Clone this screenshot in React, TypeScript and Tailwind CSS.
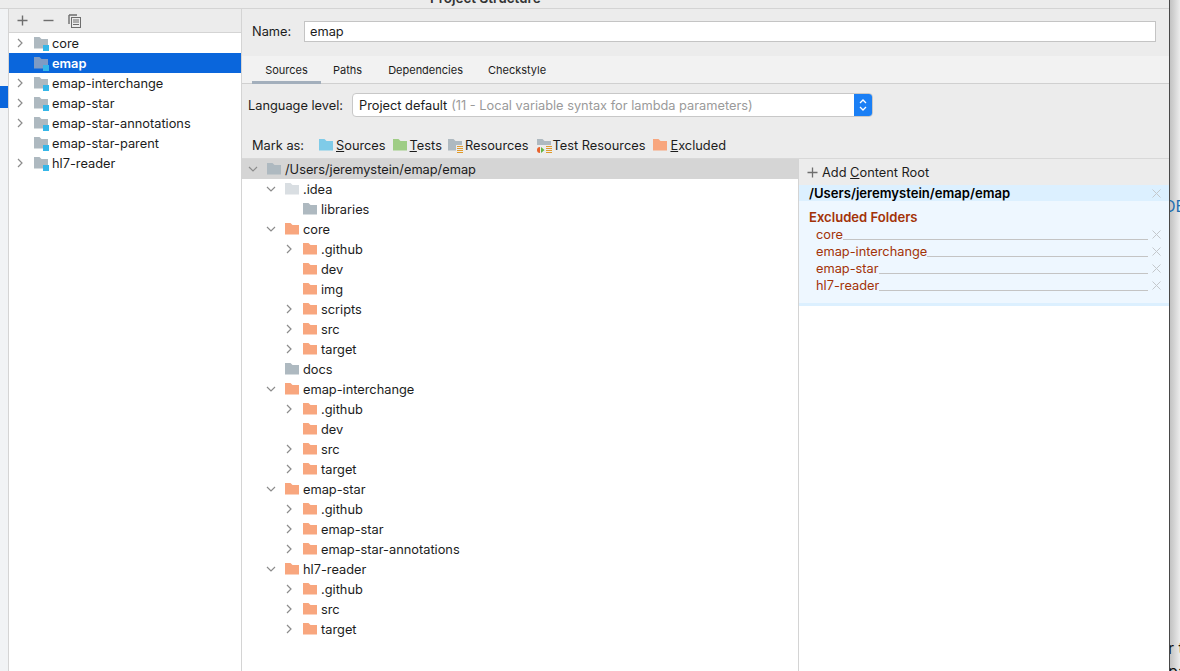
import React from "react";

const FOLDER = "M0 0h5.5l2 2H14v9.500H0z";

function Folder({ color, className = "" }: { color: string; className?: string }) {
  return (
    <svg width="14" height="12" viewBox="0 0 14 12" className={`shrink-0 ${className}`}>
      <path d={FOLDER} fill={color} />
    </svg>
  );
}

function MarkFolder({ color, className = "" }: { color: string; className?: string }) {
  return (
    <svg width="14" height="16" viewBox="0 0 14 16" className={`shrink-0 mt-[2px] ${className}`}>
      <path d={FOLDER} fill={color} />
    </svg>
  );
}

function ModuleIcon({ selected }: { selected?: boolean }) {
  return (
    <svg width="16" height="20" viewBox="0 0 16 20" className="shrink-0">
      <path d="M0 4h5.500l2 2H14v9.500H0z" fill={selected ? "#7d9bc4" : "#aeb9c0"} />
      <rect x="9" y="12" width="6" height="6" fill="#35b6e8" />
    </svg>
  );
}

function Chevron({ down, className = "" }: { down?: boolean; className?: string }) {
  return (
    <svg width="10" height="10" viewBox="0 0 10 10" className={`shrink-0 ${className}`}>
      <path d={down ? "M1 3l4 4 4-4" : "M3 1l4 4-4 4"} fill="none" stroke="#8c8c8c" strokeWidth="1.2" />
    </svg>
  );
}

function ResourcesIcon() {
  return (
    <svg width="16" height="16" viewBox="0 0 16 16" className="shrink-0 ml-[6px] mt-[2px]">
      <path d={FOLDER} fill="#aeb9c0" />
      <rect x="8" y="6" width="8" height="10" fill="#ececec" />
      <path d="M9 7.500h6M9 9.500h6M9 11.500h6M9 13.500h6" fill="none" stroke="#e09a2c" />
    </svg>
  );
}

function TestResourcesIcon() {
  return (
    <svg width="17" height="16" viewBox="0 0 17 16" className="shrink-0 ml-[7px] mt-[2px]">
      <path d="M1 0h5.500l2 2H15v9.500H1z" fill="#aeb9c0" />
      <rect x="0" y="6" width="17" height="10" fill="#ececec" />
      <path d="M4 8v6a3 3 0 0 1 0-6z" fill="#e8622c" />
      <path d="M5 8l3.500 3L5 14z" fill="#62b543" />
      <path d="M10 7.500h6M10 9.500h6M10 11.500h6M10 13.500h6" fill="none" stroke="#e09a2c" />
    </svg>
  );
}

const modules: { name: string; arrow: boolean; selected?: boolean }[] = [
  { name: "core", arrow: true },
  { name: "emap", arrow: false, selected: true },
  { name: "emap-interchange", arrow: true },
  { name: "emap-star", arrow: true },
  { name: "emap-star-annotations", arrow: true },
  { name: "emap-star-parent", arrow: false },
  { name: "hl7-reader", arrow: true },
];

type Node = { name: string; level: number; arrow?: "r" | "d"; color: string };
const OR = "#f8a67e";
const tree: Node[] = [
  { name: ".idea", level: 1, arrow: "d", color: "#d9dee2" },
  { name: "libraries", level: 2, color: "#aeb9c0" },
  { name: "core", level: 1, arrow: "d", color: OR },
  { name: ".github", level: 2, arrow: "r", color: OR },
  { name: "dev", level: 2, color: OR },
  { name: "img", level: 2, color: OR },
  { name: "scripts", level: 2, arrow: "r", color: OR },
  { name: "src", level: 2, arrow: "r", color: OR },
  { name: "target", level: 2, arrow: "r", color: OR },
  { name: "docs", level: 1, color: "#aeb9c0" },
  { name: "emap-interchange", level: 1, arrow: "d", color: OR },
  { name: ".github", level: 2, arrow: "r", color: OR },
  { name: "dev", level: 2, color: OR },
  { name: "src", level: 2, arrow: "r", color: OR },
  { name: "target", level: 2, arrow: "r", color: OR },
  { name: "emap-star", level: 1, arrow: "d", color: OR },
  { name: ".github", level: 2, arrow: "r", color: OR },
  { name: "emap-star", level: 2, arrow: "r", color: OR },
  { name: "emap-star-annotations", level: 2, arrow: "r", color: OR },
  { name: "hl7-reader", level: 1, arrow: "d", color: OR },
  { name: ".github", level: 2, arrow: "r", color: OR },
  { name: "src", level: 2, arrow: "r", color: OR },
  { name: "target", level: 2, arrow: "r", color: OR },
];

function Close({ className = "" }: { className?: string }) {
  return (
    <svg width="9" height="9" viewBox="0 0 9 9" className={`shrink-0 ${className}`}>
      <path d="M0.500 0.500l8 8M8.500 0.500l-8 8" stroke="#c4c8cc" strokeWidth="1" />
    </svg>
  );
}

function TreeRow({ n }: { n: Node }) {
  return (
    <div className={`flex items-center h-5 ${n.level === 1 ? "pl-[24px]" : "pl-[42px]"}`}>
      <div className="w-[19px] shrink-0 flex">{n.arrow && <Chevron down={n.arrow === "d"} />}</div>
      <Folder color={n.color} />
      <span className="ml-[4px] mt-[2px]">{n.name}</span>
    </div>
  );
}

export default function App() {
  return (
    <div className="w-[1180px] h-[671px] overflow-hidden flex bg-white text-[12.8px] text-[#1c1c1c] font-['Inter','Liberation_Sans',sans-serif]">
      <div className="w-[1170px] shrink-0 flex flex-col border-r border-[#484848]">
        <div className="h-[9px] shrink-0 bg-[#ececec] border-b border-[#d4d4d4] overflow-hidden pl-[430px]">
          <div className="-mt-[12px] font-semibold text-[13.5px] text-[#333]">Project Structure</div>
        </div>
        <div className="flex flex-1 min-h-0">
          <div className="w-[9px] shrink-0 bg-[#f1f3f5] border-r border-[#d4d4d4] pt-[77px]">
            <div className="h-[22px] bg-[#0a66dc]" />
          </div>
          <div className="w-[233px] shrink-0 border-r border-[#d4d4d4] flex flex-col">
            <div className="h-[24px] shrink-0 bg-[#ececec] border-b border-[#d4d4d4] flex items-center pl-[8px]">
              <svg width="11" height="11" viewBox="0 0 11 11">
                <path d="M5.500 0.500v10M0.500 5.500h10" stroke="#6e6e6e" strokeWidth="1.4" />
              </svg>
              <svg width="11" height="11" viewBox="0 0 11 11" className="ml-[15px]">
                <path d="M0.500 5.500h10" stroke="#6e6e6e" strokeWidth="1.4" />
              </svg>
              <svg width="14" height="14" viewBox="0 0 14 14" className="ml-[14px]">
                <path d="M1 1h8M1 1v9" stroke="#6e6e6e" strokeWidth="1.4" fill="none" />
                <rect x="3.500" y="3.500" width="9" height="10" fill="none" stroke="#6e6e6e" />
                <path d="M5 6h6M5 8h6M5 10.500h6" stroke="#6e6e6e" />
              </svg>
            </div>
            {modules.map((m) => (
              <div
                key={m.name}
                className={`flex items-center h-5 shrink-0 ${m.selected ? "bg-[#0a66dc] text-white font-semibold" : ""}`}
              >
                <div className="w-[25px] shrink-0 pl-[6px] flex">{m.arrow && <Chevron />}</div>
                <ModuleIcon selected={m.selected} />
                <span className="ml-[2px] mt-[2px]">{m.name}</span>
              </div>
            ))}
          </div>
          <div className="w-[927px] shrink-0 bg-[#ececec] flex flex-col">
            <div className="h-[47px] shrink-0 flex items-center pl-[10px] pr-[13px] pb-[2px]">
              <span className="w-[52px] shrink-0">Name:</span>
              <div className="flex-1 h-[21px] bg-white border border-[#c4c4c4] flex items-center pl-[5px]">emap</div>
            </div>
            <div className="h-[28px] shrink-0 bg-[#f2f2f2] border-b border-[#d0d0d0] flex pl-[10px] text-[11px]">
              <div className="w-[69px] h-[28px] flex items-center justify-center border-b-[3px] border-[#a3afbc] pt-[4px]">Sources</div>
              <div className="ml-[12px] flex items-center pt-[2px]">Paths</div>
              <div className="ml-[26px] flex items-center pt-[2px]">Dependencies</div>
              <div className="ml-[25px] flex items-center pt-[2px]">Checkstyle</div>
            </div>
            <div className="h-[44px] shrink-0 flex items-center pl-[6px] pb-[2px]">
              <span className="w-[104px] shrink-0 mt-[2px]">Language level:</span>
              <div className="w-[521px] h-[24px] bg-white border border-[#c8c8c8] rounded-[4px] flex items-center pl-[6px] relative overflow-hidden">
                <span className="mt-[2px]">Project default</span>
                <span className="ml-[4px] mt-[2px] text-[#9a9a9a]">(11 - Local variable syntax for lambda parameters)</span>
                <div className="absolute right-0 top-0 bottom-0 w-[18px] bg-[#1a7ff5] flex items-center justify-center">
                  <svg width="10" height="16" viewBox="0 0 10 16">
                    <path d="M2 6l3-3 3 3M2 10l3 3 3-3" fill="none" stroke="#fff" strokeWidth="1.3" />
                  </svg>
                </div>
              </div>
            </div>
            <div className="h-[31px] shrink-0 flex items-center pl-[10px] pt-[5px] border-b border-[#d8d8d8]">
              <span className="w-[67px] shrink-0">Mark as:</span>
              <MarkFolder color="#7fcbe8" />
              <span className="ml-[3px]"><u>S</u>ources</span>
              <MarkFolder color="#9fcd85" className="ml-[7px]" />
              <span className="ml-[3px]"><u>T</u>ests</span>
              <ResourcesIcon />
              <span className="ml-[1px]">Resources</span>
              <TestResourcesIcon />
              <span>Test Resources</span>
              <MarkFolder color={OR} className="ml-[8px]" />
              <span className="ml-[3px]"><u>E</u>xcluded</span>
            </div>
            <div className="flex flex-1 min-h-0">
              <div className="w-[557px] shrink-0 bg-white border-r border-[#d4d4d4]">
                <div className="flex items-center h-5 bg-[#d5d5d5] pl-[6px]">
                  <div className="w-[19px] shrink-0 flex"><Chevron down /></div>
                  <Folder color="#aeb9c0" />
                  <span className="ml-[4px] mt-[2px]">/Users/jeremystein/emap/emap</span>
                </div>
                {tree.map((n, i) => (
                  <TreeRow key={i} n={n} />
                ))}
              </div>
              <div className="flex-1 min-w-0 bg-white flex flex-col">
                <div className="h-[26px] shrink-0 bg-[#ececec] flex items-center pl-[8px] pt-[1px]">
                  <svg width="11" height="11" viewBox="0 0 11 11">
                    <path d="M5.500 0.500v10M0.500 5.500h10" stroke="#6e6e6e" strokeWidth="1.3" />
                  </svg>
                  <span className="ml-[4px]">Add <u>C</u>ontent Root</span>
                </div>
                <div className="h-[16px] shrink-0 bg-[#dcf0ff] flex items-center pl-[10px] pr-[8px] font-semibold text-[13.1px] text-black">
                  <span className="flex-1 mt-[2px]">/Users/jeremystein/emap/emap</span>
                  <Close />
                </div>
                <div className="h-[105px] shrink-0 bg-[#eef7ff] border-b-[3px] border-[#dcf0ff] pt-[8px] text-[#a33308]">
                  <div className="h-[17px] flex items-center pl-[10px] font-semibold text-[13.1px]">Excluded Folders</div>
                  {["core", "emap-interchange", "emap-star", "hl7-reader"].map((f) => (
                    <div key={f} className="h-[17px] flex items-center pl-[17px] pr-[8px]">
                      <span>{f}</span>
                      <div className="flex-1 self-end mb-[3px] border-b border-[#c4c4c4]" />
                      <Close className="ml-[4px]" />
                    </div>
                  ))}
                </div>
              </div>
            </div>
          </div>
        </div>
      </div>
      <div className="flex-1 min-w-0 bg-gradient-to-r from-[#c2c2c2] to-[#ececec] flex flex-col text-[16px] leading-[16px] text-[#111] overflow-hidden whitespace-nowrap">
        <div className="h-[198px] shrink-0" />
        <div className="-ml-[6px] text-[#1f6fb0]">DE</div>
        <div className="h-[426px] shrink-0" />
        <div className="-ml-[2px]">r t</div>
        <div className="h-[7px] shrink-0" />
        <div className="-ml-[2px]">pa</div>
      </div>
    </div>
  );
}
